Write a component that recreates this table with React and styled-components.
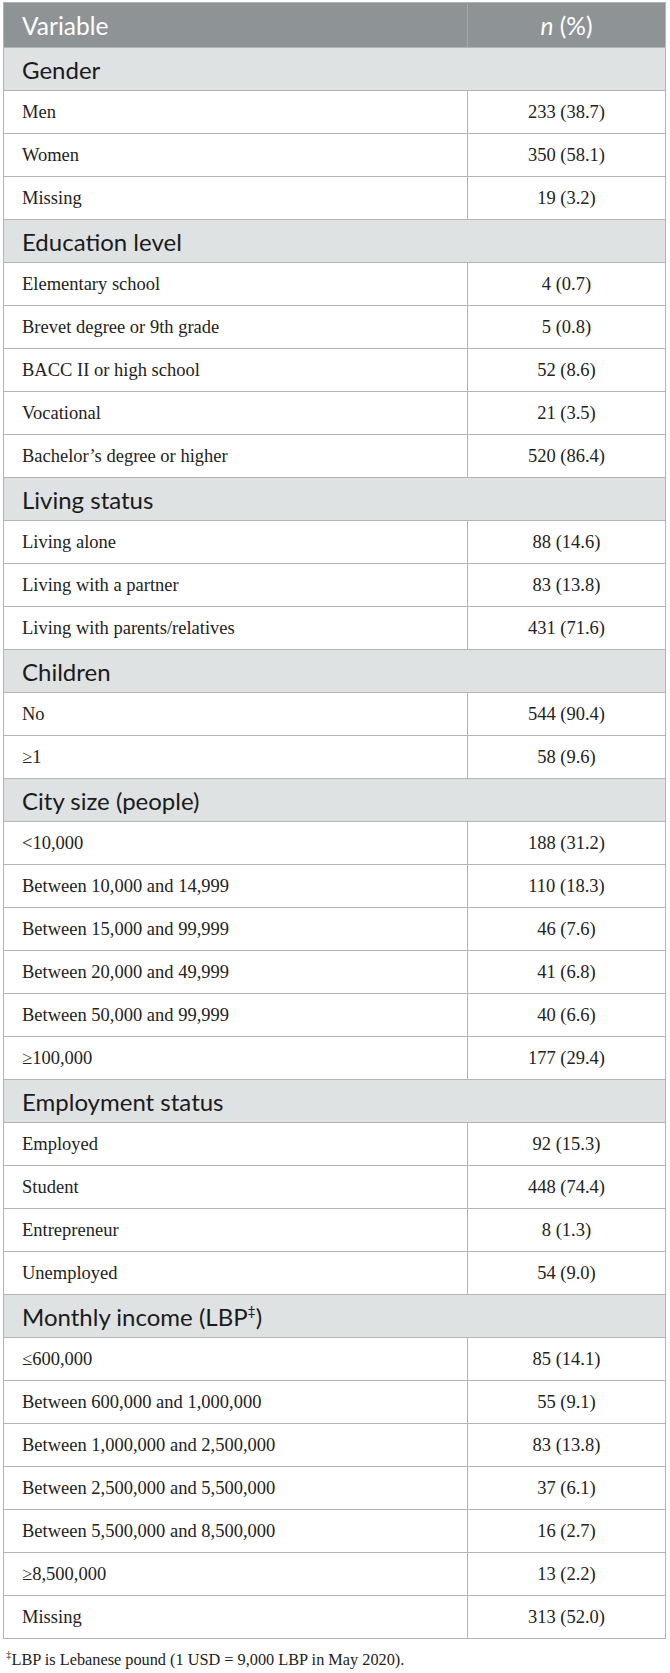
import styled, { createGlobalStyle } from 'styled-components';

const GlobalStyle = createGlobalStyle`
    body
    {
        margin:0;
        background:#fff;
        font-family:"Liberation Serif", serif;
    }
`

const sections = [
    { title: 'Gender', rows: [['Men', '233 (38.7)'], ['Women', '350 (58.1)'], ['Missing', '19 (3.2)']] },
    {
        title: 'Education level',
        rows: [
            ['Elementary school', '4 (0.7)'],
            ['Brevet degree or 9th grade', '5 (0.8)'],
            ['BACC II or high school', '52 (8.6)'],
            ['Vocational', '21 (3.5)'],
            ['Bachelor\u2019s degree or higher', '520 (86.4)'],
        ],
    },
    {
        title: 'Living status',
        rows: [
            ['Living alone', '88 (14.6)'],
            ['Living with a partner', '83 (13.8)'],
            ['Living with parents/relatives', '431 (71.6)'],
        ],
    },
    { title: 'Children', rows: [['No', '544 (90.4)'], ['\u22651', '58 (9.6)']] },
    {
        title: 'City size (people)',
        rows: [
            ['<10,000', '188 (31.2)'],
            ['Between 10,000 and 14,999', '110 (18.3)'],
            ['Between 15,000 and 99,999', '46 (7.6)'],
            ['Between 20,000 and 49,999', '41 (6.8)'],
            ['Between 50,000 and 99,999', '40 (6.6)'],
            ['\u2265100,000', '177 (29.4)'],
        ],
    },
    {
        title: 'Employment status',
        rows: [
            ['Employed', '92 (15.3)'],
            ['Student', '448 (74.4)'],
            ['Entrepreneur', '8 (1.3)'],
            ['Unemployed', '54 (9.0)'],
        ],
    },
    {
        title: 'Monthly income (LBP',
        sup: '\u2021',
        titleEnd: ')',
        rows: [
            ['\u2264600,000', '85 (14.1)'],
            ['Between 600,000 and 1,000,000', '55 (9.1)'],
            ['Between 1,000,000 and 2,500,000', '83 (13.8)'],
            ['Between 2,500,000 and 5,500,000', '37 (6.1)'],
            ['Between 5,500,000 and 8,500,000', '16 (2.7)'],
            ['\u22658,500,000', '13 (2.2)'],
            ['Missing', '313 (52.0)'],
        ],
    },
]

const App = () =>
{
    return(
        <Page>
            <GlobalStyle />
            <Table>
                <thead>
                    <tr>
                        <HeadCell>Variable</HeadCell>
                        <HeadCell $center><i>n</i> (%)</HeadCell>
                    </tr>
                </thead>
                <tbody>
                    {sections.map((s) => (
                        <Section key={s.title} section={s} />
                    ))}
                </tbody>
            </Table>
            <Footnote>
                <sup>{'\u2021'}</sup>LBP is Lebanese pound (1 USD = 9,000 LBP in May 2020).
            </Footnote>
        </Page>
    )
}

const Section = ({ section }) =>
{
    return(
        <>
            <tr>
                <GroupCell colSpan={2}>
                    {section.title}
                    {section.sup && <GroupSup>{section.sup}</GroupSup>}
                    {section.titleEnd}
                </GroupCell>
            </tr>
            {section.rows.map(([label, value]) => (
                <tr key={label}>
                    <Cell>{label}</Cell>
                    <Cell $center>{value}</Cell>
                </tr>
            ))}
        </>
    )
}

const Page = styled.div`
    padding:2px 4px 0 3px;
    width:663px;
`
const Table = styled.table`
    width:663px;
    border-collapse:collapse;
    table-layout:fixed;
    border:1px solid #b1b5b6;
`
const HeadCell = styled.th`
    height:45px;
    box-sizing:border-box;
    background-color:#8e9496;
    color:#fff;
    font-family:Lato, "Open Sans", sans-serif;
    font-weight:400;
    font-size:24.5px;
    text-align:${(p) => (p.$center ? 'center' : 'left')};
    width:${(p) => (p.$center ? '198px' : 'auto')};
    border-left:${(p) => (p.$center ? '1px solid #a3a8aa' : 'none')};
    padding:0 0 0 ${(p) => (p.$center ? '0' : '18px')};
    border-bottom:1px solid #b1b5b6;
`
const GroupCell = styled.td`
    height:43px;
    box-sizing:border-box;
    padding:0 0 0 18px;
    background-color:#dfe2e3;
    color:#1b1b1b;
    font-family:Lato, "Open Sans", sans-serif;
    font-size:24px;
    border:1px solid #b1b5b6;
`
const GroupSup = styled.sup`
    font-size:14px;
    vertical-align:10px;
    line-height:0;
`
const Cell = styled.td`
    height:43px;
    box-sizing:border-box;
    padding:0 0 0 ${(p) => (p.$center ? '0' : '18px')};
    text-align:${(p) => (p.$center ? 'center' : 'left')};
    color:#222;
    font-family:"Liberation Serif", serif;
    font-size:18.5px;
    border:1px solid #b1b5b6;
`
const Footnote = styled.p`
    margin:11px 0 0 3px;
    font-family:"Liberation Serif", serif;
    font-size:16.3px;
    color:#222;

    sup
    {
        font-size:11px;
        vertical-align:7px;
        line-height:0;
    }
`
export default App;
